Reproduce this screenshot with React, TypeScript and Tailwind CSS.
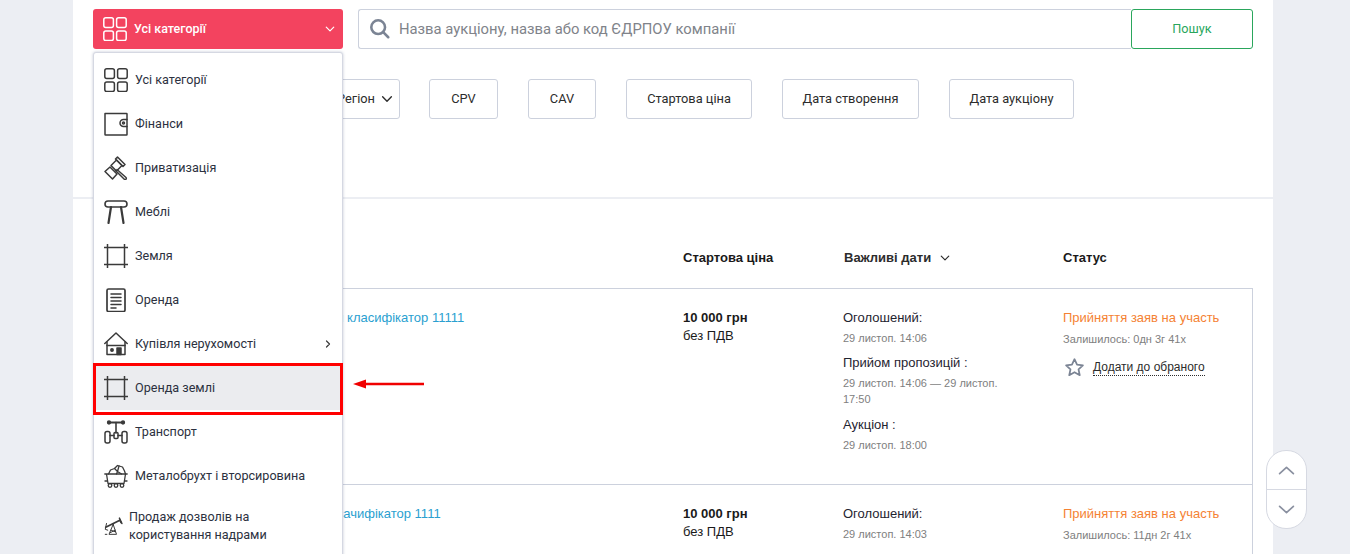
import React from "react";

const S = { fill: "none", stroke: "currentColor", strokeWidth: 1.5, strokeLinecap: "round", strokeLinejoin: "round" } as const;

function GridIcon({ className = "" }: { className?: string }) {
  return (
    <svg viewBox="0 0 24 24" className={className} {...S}>
      <rect x="0.8" y="0.8" width="9.6" height="9.6" rx="2" />
      <rect x="13.6" y="0.8" width="9.6" height="9.6" rx="2" />
      <rect x="0.8" y="14" width="9.6" height="9.6" rx="2" />
      <rect x="13.6" y="14" width="9.6" height="9.6" rx="2" />
    </svg>
  );
}
const Wallet = () => (
  <svg viewBox="0 0 24 24" className="w-6 h-6" {...S}>
    <path d="M1 1.5h21.5a.5.5 0 0 1 .5.5v5.5M23 14.5v8a.5.5 0 0 1-.5.5H1.5a.5.5 0 0 1-.5-.5V1.5" />
    <path d="M23 7.5h-3.5a3.5 3.5 0 0 0 0 7H23z" />
    <circle cx="19.5" cy="11" r="1" />
  </svg>
);
const Gavel = () => (
  <svg viewBox="0 0 24 24" className="w-6 h-6" {...S}>
    <path d="M13.5 1 21 8.5 19 10.5 11.5 3z" />
    <path d="M12.5 4 18 9.5 12.5 15 7 9.5z" />
    <path d="M13 13.5 22 21.5a1.2 1.2 0 0 1-1.7 1.7L11.5 14.5" />
    <path d="M1 15.5 6 11 13 18 8.5 23 1 15.5z" />
  </svg>
);
const Stool = () => (
  <svg viewBox="0 0 24 24" className="w-6 h-6" {...S} strokeWidth={1.6}>
    <rect x="1" y="1" width="22" height="6" rx="3" />
    <path d="M7 7 4.5 23" strokeWidth={2.2} />
    <path d="M17 7 19.5 23" strokeWidth={2.2} />
  </svg>
);
const Land = () => (
  <svg viewBox="0 0 24 24" className="w-6 h-6" {...S} strokeLinecap="butt">
    <path d="M0 3.5h24M0 20.5h24M3.5 0v24M20.5 0v24" />
  </svg>
);
const Doc = () => (
  <svg viewBox="0 0 24 24" className="w-6 h-6" {...S}>
    <rect x="3" y="1" width="18" height="22.5" rx="1.5" strokeWidth={1.7} />
    <path d="M7 6h10M7 9.5h10M7 13h10M7 16.5h10M7 20h5" />
  </svg>
);
const House = () => (
  <svg viewBox="0 0 24 24" className="w-6 h-6" {...S}>
    <path d="M.8 11.5 12 1l11.2 10.5" />
    <path d="M3 10v12.5h18V10" />
    <path d="M3 13.5h18" />
    <circle cx="8" cy="18" r="1.2" fill="currentColor" />
    <rect x="13" y="16" width="4" height="6.5" fill="currentColor" />
  </svg>
);
const Chassis = () => (
  <svg viewBox="0 0 24 24" className="w-6 h-6" {...S}>
    <path d="M4 2.5h16" strokeWidth={2} />
    <circle cx="5" cy="2.5" r="1.4" fill="currentColor" />
    <circle cx="19" cy="2.5" r="1.4" fill="currentColor" />
    <path d="M12 2.5V13" strokeWidth={1.6} />
    <rect x="10" y="12.5" width="4" height="6" rx="1" />
    <rect x="1" y="11.5" width="5" height="11.5" rx="2" />
    <rect x="18" y="11.5" width="5" height="11.5" rx="2" />
    <path d="M6 15.5h4M14 15.5h4" />
  </svg>
);
const Cart = () => (
  <svg viewBox="0 0 24 24" className="w-6 h-6" {...S} strokeWidth={1.3}>
    <path d="M.8 10h22.4M2.5 10l1.5 9.5h16L21.5 10" />
    <path d="M4.5 10l2-4 4-1.5 3-3 5 1.5 2 4 1 3" />
    <path d="M10.5 4.5l3 3-1 2.5M15 2l-1.5 5.5 4 2.5" />
    <circle cx="6" cy="21.5" r="1.8" />
    <circle cx="12" cy="21.5" r="1.8" />
    <circle cx="18" cy="21.5" r="1.8" />
    <path d="M1 17h2M21 17h2" />
  </svg>
);
const Pump = () => (
  <svg viewBox="0 0 24 24" className="w-6 h-6" {...S} strokeWidth={1.2}>
    <path d="M2 13.5 19 5l1.5 3" strokeWidth={2} />
    <path d="M18.5 2.5 21.5 9" strokeWidth={1.8} />
    <path d="M3 9l-1.5 7 3 1" />
    <path d="M11 10 6 22h9L11 10zM8.5 17l5 2M7.5 20l6-3" />
    <path d="M1.5 22h2" />
  </svg>
);

const Chevron = ({ d = "M3 5.5 8 10.5 13 5.5", className = "" }: { d?: string; className?: string }) => (
  <svg viewBox="0 0 16 16" className={className} fill="none" stroke="currentColor" strokeWidth={1.6} strokeLinecap="round" strokeLinejoin="round">
    <path d={d} />
  </svg>
);

const items: { icon: React.ReactNode; label: string; more?: boolean }[] = [
  { icon: <GridIcon className="w-6 h-6" />, label: "Усі категорії" },
  { icon: <Wallet />, label: "Фінанси" },
  { icon: <Gavel />, label: "Приватизація" },
  { icon: <Stool />, label: "Меблі" },
  { icon: <Land />, label: "Земля" },
  { icon: <Doc />, label: "Оренда" },
  { icon: <House />, label: "Купівля нерухомості", more: true },
];
const items2 = [
  { icon: <Chassis />, label: "Транспорт" },
  { icon: <Cart />, label: "Металобрухт і вторсировина" },
];

function Row({ title, pad, bid, left, rows }: { title: string; pad: string; bid: string; left: string; rows: React.ReactNode }) {
  return (
    <div className="flex h-[196px] border-b border-[#ccd1dd] last:border-b-0">
      <div className={`w-[589px] pt-[20px] text-[13px] leading-[18px] text-[#2a9fd0] whitespace-nowrap ${pad}`}>{title}</div>
      <div className="w-[160px] pt-[20px] text-[13px] leading-[18px] text-[#1a1a1a]">
        <div className="font-bold">{bid}</div>
        <div>без ПДВ</div>
      </div>
      <div className="w-[220px] pt-[20px] pr-[50px]">{rows}</div>
      <div className="flex-1 pt-[20px]">
        <div className="text-[13px] leading-[18px] text-[#f58233]">Прийняття заяв на участь</div>
        <div className="mt-[3px] text-[11px] leading-[18px] text-[#808080]">Залишилось: {left}</div>
        <div className="mt-[9px] flex items-center gap-[8px] pl-[1px]">
          <svg viewBox="0 0 24 24" className="w-[21px] h-[21px] text-[#7b8494]" fill="none" stroke="currentColor" strokeWidth={2} strokeLinejoin="round">
            <path d="M12 2.5l2.9 6.2 6.7.8-5 4.6 1.4 6.7L12 17.4l-6 3.4 1.4-6.7-5-4.6 6.7-.8z" />
          </svg>
          <span className="text-[12px] leading-[15px] text-[#2c2c2c] border-b border-dotted border-[#2c2c2c]">Додати до обраного</span>
        </div>
      </div>
    </div>
  );
}

const DateBlock = ({ t, d, cls = "" }: { t: string; d: string; cls?: string }) => (
  <div className={cls}>
    <div className="text-[13px] leading-[18px] text-[#1f2430]">{t}</div>
    <div className="mt-[3px] text-[11px] leading-[16px] text-[#808080]">{d}</div>
  </div>
);

const Filter = ({ children, className = "" }: { children: React.ReactNode; className?: string }) => (
  <div className={`h-[40px] flex items-center justify-center border border-[#ccd1dd] rounded-[3px] text-[12.8px] text-[#2c2c2c] bg-white ${className}`}>{children}</div>
);

export default function App() {
  return (
    <div className="relative h-[554px] overflow-hidden bg-[#eceef3] [font-family:Roboto,'Liberation_Sans',sans-serif]">
      <div className="ml-[73px] w-[1200px] h-full bg-white">
        <div className="h-[199px] border-b-2 border-[#eceef3] px-[20px] pt-[9px]">
          <div className="flex">
            <div className="w-[250px] h-[40px] mr-[15px] flex items-center rounded-[3px] bg-[#f3435f] text-white pl-[10px] pr-[7px]">
              <GridIcon className="w-6 h-6" />
              <span className="ml-[7px] text-[12.5px] font-medium flex-1">Усі категорії</span>
              <Chevron className="w-[12px] h-[12px]" />
            </div>
            <div className="flex-1 h-[40px] flex items-center border border-r-0 border-[#ccd1dd] rounded-l-[3px] pl-[10px]">
              <svg viewBox="0 0 24 24" className="w-[22px] h-[22px] text-[#7b8494]" fill="none" stroke="currentColor" strokeWidth={2.8} strokeLinecap="round">
                <circle cx="10" cy="10" r="7.5" />
                <path d="M15.5 15.5 21 21" />
              </svg>
              <span className="ml-[8px] text-[14.8px] text-[#80838a]">Назва аукціону, назва або код ЄДРПОУ компанії</span>
            </div>
            <div className="w-[122px] h-[40px] flex items-center justify-center border border-[#2aa65c] rounded-[3px] text-[12.7px] text-[#2aa65c]">Пошук</div>
          </div>
          <div className="flex gap-[29px] mt-[30px]">
            <Filter className="w-[307px] justify-end pr-[5px] gap-[5px]">
              <span>Регіон</span>
              <Chevron className="w-[14px] h-[14px]" />
            </Filter>
            <Filter className="w-[69px]">CPV</Filter>
            <Filter className="w-[68px] ml-[1px]">CAV</Filter>
            <Filter className="w-[126px] ml-[1px]">Стартова ціна</Filter>
            <Filter className="w-[137px] ml-[1px]">Дата створення</Filter>
            <Filter className="w-[125px] ml-[1px]">Дата аукціону</Filter>
          </div>
        </div>
        <div className="px-[20px] [font-family:'Liberation_Sans',Arial,sans-serif]">
          <div className="h-[89px] flex pt-[50px] text-[13px] leading-[18px] text-[#1a1a1a]">
            <div className="w-[590px]" />
            <div className="w-[161px] font-bold">Стартова ціна</div>
            <div className="w-[219px] flex items-center gap-[8px] text-[#2c2c2c] h-[18px] font-bold">
              Важливі дати
              <Chevron className="w-[12px] h-[12px]" />
            </div>
            <div className="font-bold">Статус</div>
          </div>
          <div className="border border-[#ccd1dd] border-b-0">
            <Row
              title="Тестова оренда земля класифікатор 11111"
              pad="pl-[114px]"
              bid="10 000 грн"
              left="0дн 3г 41х"
              rows={
                <>
                  <DateBlock t="Оголошений:" d="29 листоп. 14:06" />
                  <DateBlock cls="mt-[8px]" t="Прийом пропозицій :" d="29 листоп. 14:06 — 29 листоп. 17:50" />
                  <DateBlock cls="mt-[9px]" t="Аукціон :" d="29 листоп. 18:00" />
                </>
              }
            />
            <Row
              title="Тестова оренда земля класачифікатор 1111"
              pad="pl-[83px]"
              bid="10 000 грн"
              left="11дн 2г 41х"
              rows={<DateBlock t="Оголошений:" d="29 листоп. 14:03" />}
            />
          </div>
        </div>
      </div>

      {/* category dropdown */}
      <div className="absolute left-[93px] top-[52px] w-[250px] h-[520px] bg-white rounded-[3px] border border-[#d5d8e2] shadow-[0_0_3px_rgba(120,130,160,0.45)] pt-[5px] text-[#2c3140]">
        {items.map((it) => (
          <div key={it.label} className="h-[44px] flex items-center pl-[10px] pr-[8px] text-[#3a3a3a]">
            <span className="w-6 h-6 shrink-0">{it.icon}</span>
            <span className="ml-[7px] flex-1 text-[12.6px] text-[#2c3140]">{it.label}</span>
            {it.more && <Chevron d="M6 4l4 4-4 4" className="w-[12px] h-[12px]" />}
          </div>
        ))}
        <div className="h-[44px] flex items-center pl-[10px] bg-[#ebecef] text-[#3a3a3a]">
          <span className="w-6 h-6 shrink-0"><Land /></span>
          <span className="ml-[7px] text-[12.6px] text-[#2c3140]">Оренда землі</span>
        </div>
        {items2.map((it) => (
          <div key={it.label} className="h-[44px] flex items-center pl-[10px] text-[#3a3a3a]">
            <span className="w-6 h-6 shrink-0">{it.icon}</span>
            <span className="ml-[7px] text-[12.6px] text-[#2c3140]">{it.label}</span>
          </div>
        ))}
        <div className="h-[44px] mt-[6px] flex items-center pl-[10px] text-[#3a3a3a]">
          <span className="w-[20px] h-[20px] shrink-0 mr-[5px] [&>svg]:w-full [&>svg]:h-full"><Pump /></span>
          <span className="text-[12.6px] leading-[18px] text-[#2c3140] w-[170px]">Продаж дозволів на користування надрами</span>
        </div>
      </div>

      {/* annotation */}
      <div className="absolute left-[93px] top-[363px] w-[250px] h-[52px] border-[3px] border-[#ff0000]" />
      <svg className="absolute left-[350px] top-[376px] w-[76px] h-[16px]" viewBox="0 0 76 16">
        <path d="M3 8 16 3.5v3.3h58v2.4H16v3.3z" fill="#f00000" />
      </svg>

      {/* scroll widget */}
      <div className="absolute left-[1266px] top-[450px] w-[41px] h-[79px] rounded-[20px] border border-[#d6d9e2] bg-white flex flex-col text-[#8a90a0]">
        <div className="h-[39px] flex items-center justify-center border-b border-[#d6d9e2]">
          <Chevron d="M1.5 11 8 5l6.5 6" className="w-[17px] h-[17px]" />
        </div>
        <div className="flex-1 flex items-center justify-center">
          <Chevron d="M1.5 5 8 11l6.5-6" className="w-[17px] h-[17px]" />
        </div>
      </div>
    </div>
  );
}
